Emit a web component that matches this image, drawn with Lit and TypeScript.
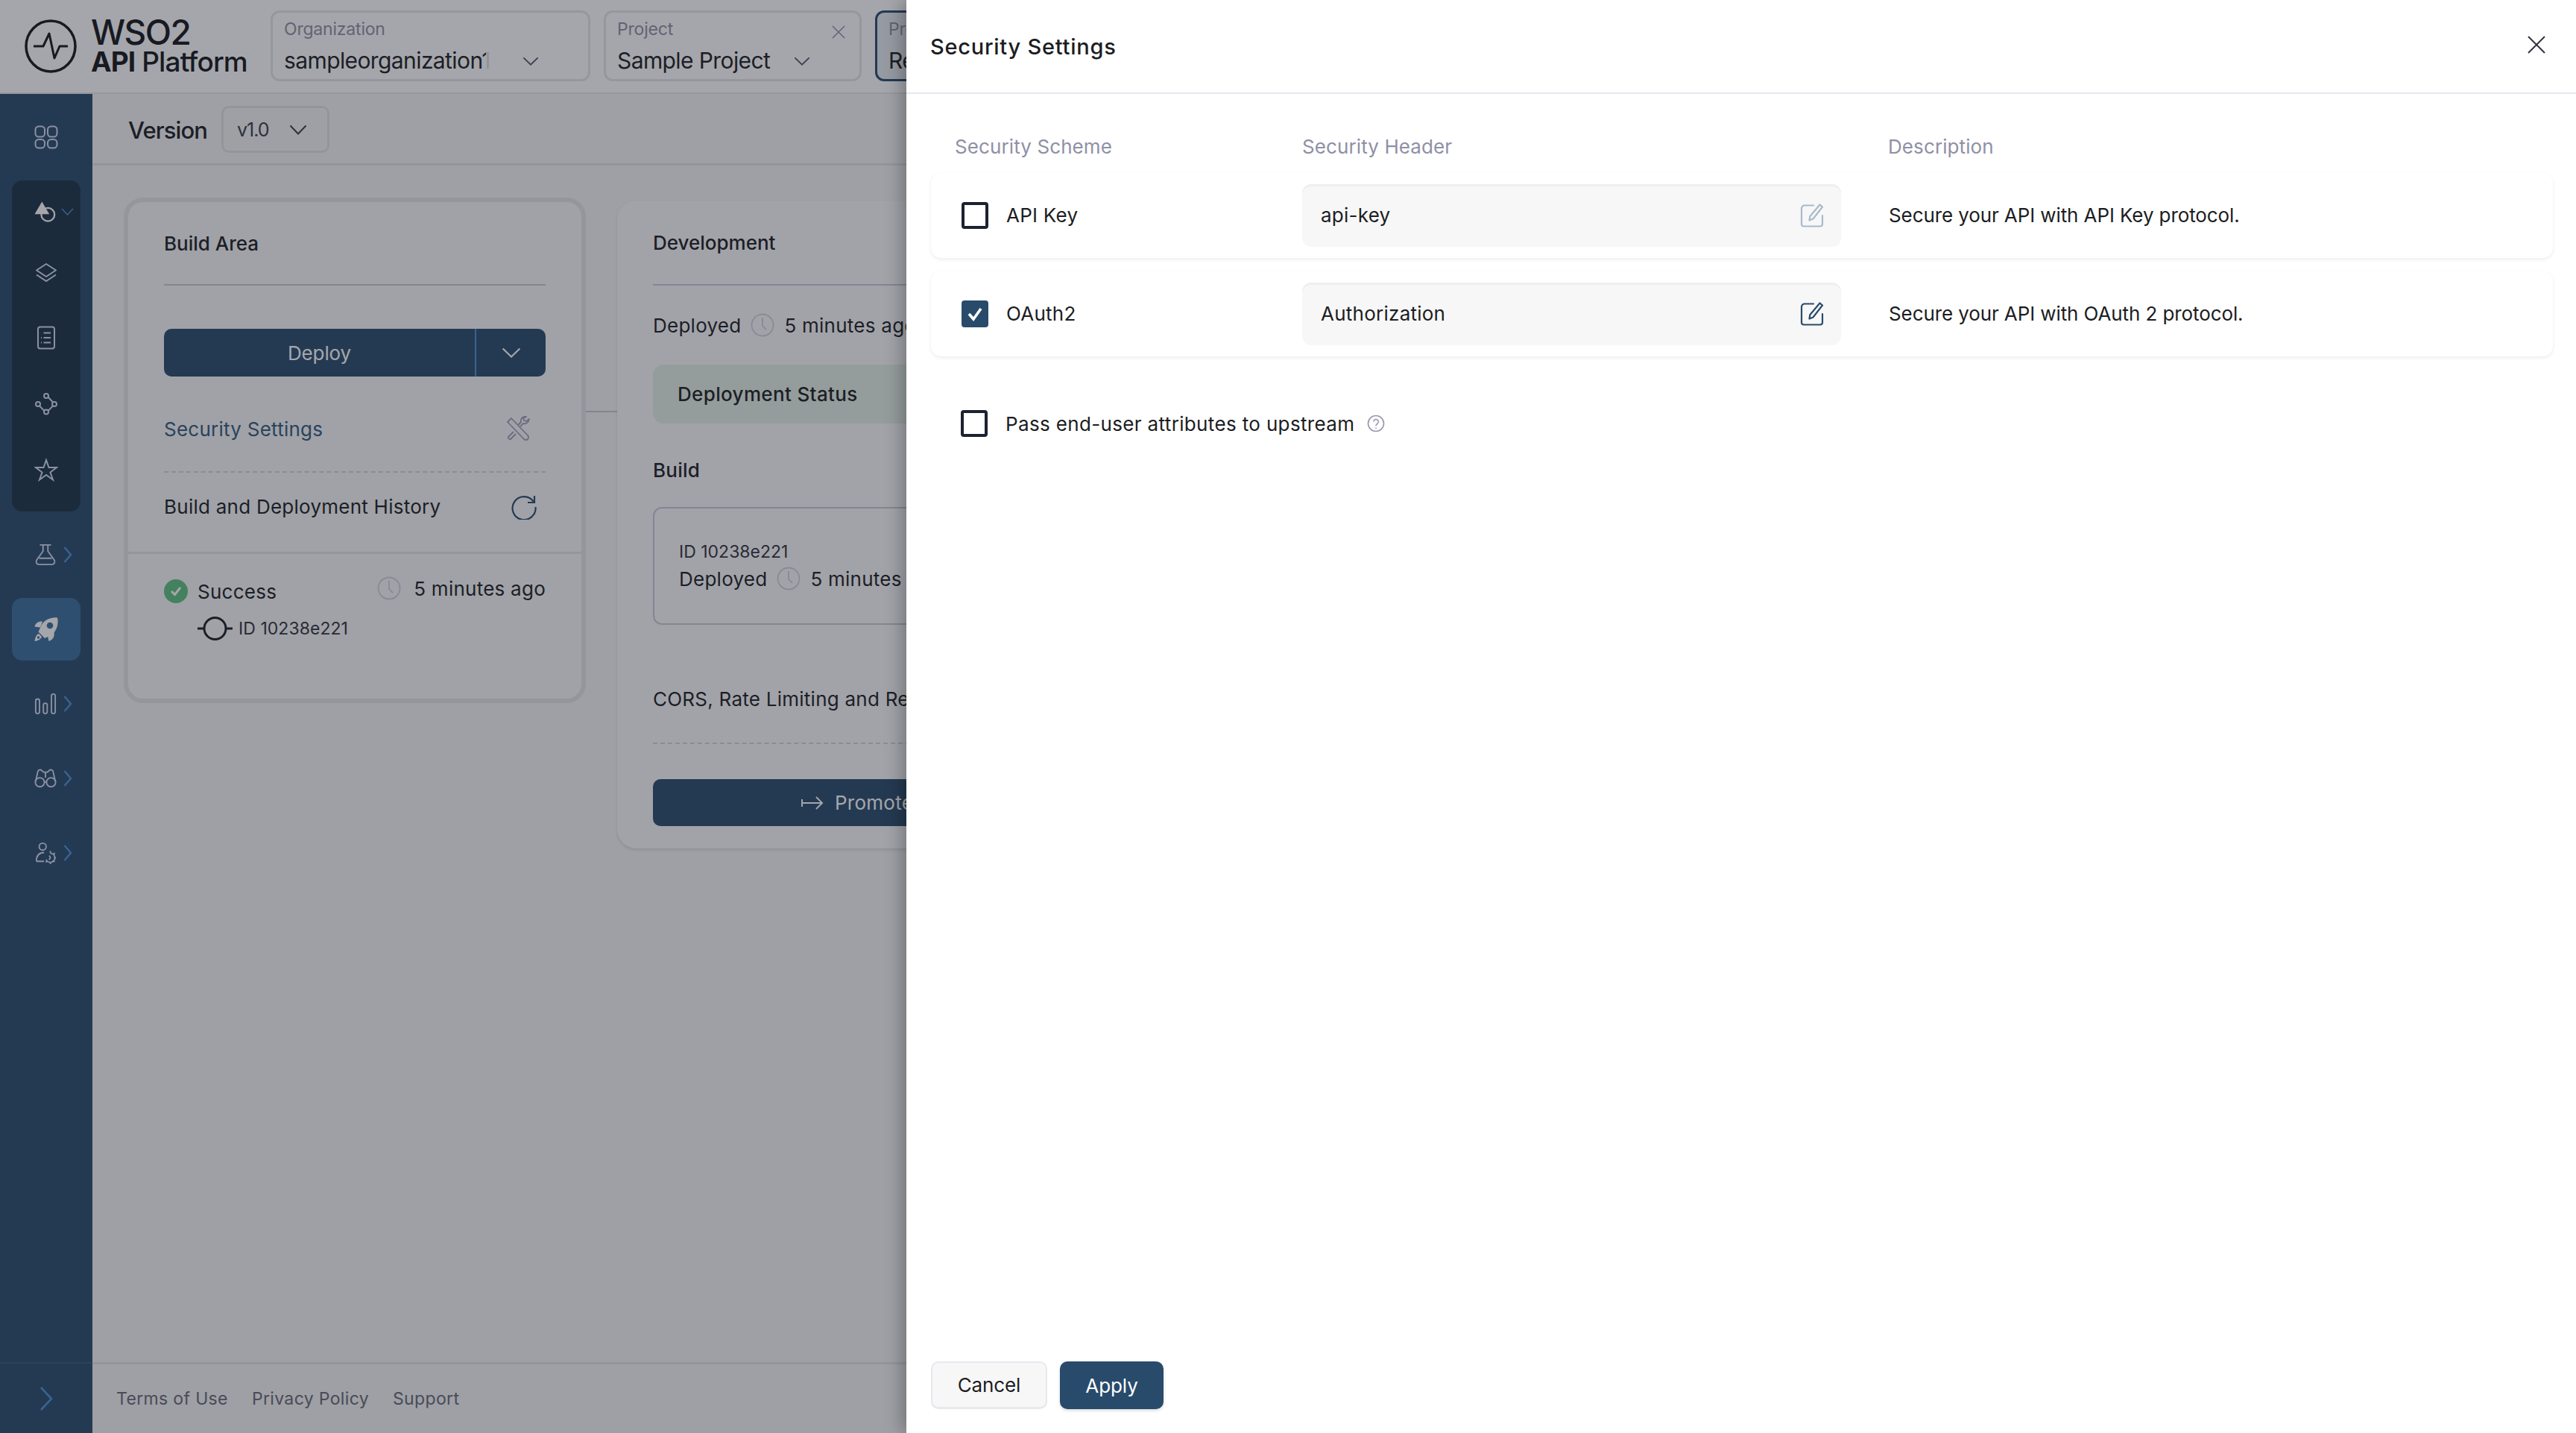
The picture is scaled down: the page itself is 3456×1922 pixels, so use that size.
import { LitElement, html, css, svg } from "lit";
import { customElement } from "lit/decorators.js";

const chevDown = (w = 24, h = 14) => html`<svg width=${w} height=${h} viewBox="0 0 24 14" preserveAspectRatio="none" fill="none" stroke="currentColor" stroke-width="2"><path d="M1.5 1.5 12 12.5 22.5 1.5"/></svg>`;
const chevRight = () => html`<svg class="navchev" width="12" height="24" viewBox="0 0 12 24" fill="none" stroke="currentColor" stroke-width="2.4"><path d="M1.5 2 10 12 1.5 22"/></svg>`;
const clock = (w = 32) => html`<svg class="clock" width=${w} height=${w} viewBox="0 0 32 32" fill="none" stroke="currentColor" stroke-width="1.8"><circle cx="16" cy="16" r="14.5"/><path d="M16 6v11l5 5"/></svg>`;
const edit = (cls: string) => html`<svg class=${cls} width="32" height="32" viewBox="0 0 32 32" fill="none" stroke="currentColor" stroke-width="2.2" stroke-linejoin="round" stroke-linecap="round"><path d="M18 2.500H6a4 4 0 0 0-4 4v21a3 3 0 0 0 3 3h22a3 3 0 0 0 3-3V16"/><path d="M26.500 1.500l3.500 3-12.500 16-5 2 .8-5.300z"/></svg>`;

const icons: Record<string, unknown> = {
  dash: svg`<rect x="1.500" y="1.500" width="12.500" height="14" rx="4.500"/><rect x="18" y="1.500" width="12.500" height="14" rx="4.500"/><rect x="1.500" y="19" width="12.500" height="11.500" rx="4.500"/><rect x="18" y="19" width="12.500" height="11.500" rx="4.500"/>`,
  shapes: svg`<path d="M11 1.500 21.500 19.500H.5z" fill="currentColor" stroke="none"/><circle cx="19.500" cy="20" r="9.500" stroke-width="2.400"/>`,
  layers: svg`<path d="M16 4 29 12.500 16 21 3 12.500z" stroke-linejoin="round"/><path d="M3 18.500 16 27 29 18.500"/>`,
  doc: svg`<rect x="5" y="1.500" width="22" height="29" rx="3"/><path d="M12.500 9.500h9.500M12.500 16h9.500M12.500 22.500h9.500M9 16h1M9 22.500h1"/>`,
  path: svg`<circle cx="16" cy="5" r="3"/><circle cx="5" cy="16" r="3"/><circle cx="27" cy="16" r="3"/><circle cx="16" cy="26.500" r="3"/><path d="M18.500 6.500 25 13.500M7 18.500 13.500 25M18.500 25 25 18.500"/>`,
  star: svg`<path d="M16 3 19.500 13H30L21.500 19.500 25 29.500 16 23 7 29.500 10.500 19.500 2 13H12.500z" stroke-linejoin="miter"/>`,
  flask: svg`<path d="M8 2H24M12.500 2V11L3.500 23.500C1.500 27 3.500 30 7 30H25C28.500 30 30.500 27 28.500 23.500L19.500 11V2M7 21H25"/>`,
  rocket: svg`<path fill="currentColor" stroke="none" d="M31 .5C23 -.5 14 3 9.500 10.500L5.500 19.500 14 28 22.500 24C30 19 33 9 31 .5Z"/><path fill="currentColor" stroke="none" d="M11 5.500C6 5 1.500 7.500 .5 12.500L8 13.500ZM26.500 20C27.500 25 25.500 30 19.500 32L18 25Z"/><path fill="currentColor" stroke="none" d="M6 22C3 23 1 27 .5 32 5 31.500 9 29 10 26Z"/><circle cx="21" cy="11" r="4.300" fill="#3a6f9d" stroke="none"/><circle cx="5.500" cy="27" r="1.700" fill="#3a6f9d" stroke="none"/>`,
  bars: svg`<rect x="2" y="9" width="5.500" height="21" rx="2.700"/><rect x="13" y="15" width="5.500" height="15" rx="2.700"/><rect x="24.500" y="2" width="5.500" height="28" rx="2.700"/>`,
  bino: svg`<circle cx="8" cy="21.500" r="6.500"/><circle cx="24" cy="21.500" r="6.500"/><path d="M2 20 5 6.500C5.500 3.500 9 3 11 5L13 7H19L21 5C23 3 26.500 3.500 27 6.500L30 20M14.500 21.500H17.500M16 7V15"/>`,
  user: svg`<circle cx="12" cy="7" r="5"/><path d="M3 28H14M3 28C3 20 7 15.500 14 15.500"/><path d="M23 16.500a6.500 6.500 0 1 1-6 9M21 20a3 3 0 0 1 0 5.500M23 13v3M29.500 16l-2.500 2.500M31 23h-3M29 29l-2.500-2.500M23 32v-3M16.500 29.500l2.500-2.500"/>`,
};
const navIcon = (n: string, w = 32, h = 32, cls = "navicon") => html`<svg class=${cls} width=${w} height=${h} viewBox="0 0 32 32" fill="none" stroke="currentColor" stroke-width="2">${icons[n]}</svg>`;

@customElement("app-root")
export class AppRoot extends LitElement {
  static styles = css`
    :host { display: block; position: relative; width: 3456px; height: 1922px; overflow: hidden; background: #f4f5f6; color: #1c1d22; font-family: Inter, "Noto Sans", "Liberation Sans", sans-serif; font-size: 26px; letter-spacing: .25px; }
    * { box-sizing: border-box; }
    .page { display: flex; flex-direction: column; height: 1922px; }
    .topbar { flex: none; height: 126px; background: #fff; border-bottom: 2px solid #e6e7ea; display: flex; align-items: flex-start; padding: 14px 0 0 33px; }
    .logo { margin: 12px 0 0 0; flex: none; }
    .brand { width: 260px; padding: 8px 0 0 19px; flex: none; display: flex; flex-direction: column; color: #15161b; }
    .brand b { font-size: 46px; line-height: 42px; font-weight: 500; letter-spacing: -1.5px; }
    .brand span { font-size: 37px; line-height: 38px; font-weight: 500; letter-spacing: -.9px; white-space: nowrap; }
    .brand span strong { font-weight: 700; }
    .sel { height: 95px; border: 3px solid #e6e7ea; border-radius: 12px; padding: 8px 0 0 15px; position: relative; margin-right: 18px; flex: none; }
    .sel.org { width: 429px; }
    .sel.prj { width: 346px; }
    .sel.act { width: 300px; border-color: #284b6c; background: #e6ebf0; margin-right: 0; }
    .sel .lbl { font-size: 23px; line-height: 28px; color: #8f90a6; letter-spacing: -.2px; display: block; }
    .sel .val { font-size: 30px; line-height: 40px; color: #1c1d22; margin-top: 8px; white-space: nowrap; letter-spacing: -.6px; display: block; overflow: hidden; }
    .sel.org .val { width: 293px; position: relative; }
    .sel.org .val::after { content: ""; position: absolute; right: 0; top: 4px; width: 22px; height: 34px; background: rgba(255,255,255,.85); }
    .sel .chev { position: absolute; right: 66px; top: 46px; color: #55566a; }
    .sel .x { position: absolute; right: 19px; top: 17px; color: #8f90a6; }
    .body { flex: 1; display: flex; min-height: 0; }
    .side { flex: none; width: 124px; background: #284b6c; display: flex; flex-direction: column; padding-top: 16px; color: #d3dcf1; }
    .nav { height: 84px; margin: 0 16px 16px; border-radius: 14px; display: flex; align-items: center; padding-left: 30px; gap: 9px; flex: none; }
    .nav.on { background: #3a6f9d; color: #fff; }
    .navchev { color: #4a90d8; flex: none; display: flex; }
    .white { color: #fff; flex: none; }
    .group { margin: 0 16px 16px; height: 444px; background: #1a3245; border-radius: 14px; display: grid; grid-template-rows: 84px 80px 94px 84px 92px; flex: none; }
    .gitem { display: flex; align-items: center; padding-left: 30px; gap: 6px; }
    .sidefoot { margin-top: auto; height: 95px; border-top: 2px solid #35597c; display: flex; align-items: center; padding: 0 0 0 52px; color: #4a90d8; }
    .main { flex: 1; min-width: 0; display: flex; flex-direction: column; }
    .verrow { flex: none; height: 96px; border-bottom: 3px solid #e2e3e7; display: flex; align-items: flex-start; padding: 16px 0 0 48px; }
    .verrow .t { font-size: 31px; line-height: 65px; font-weight: 500; letter-spacing: -.9px; width: 125px; }
    .versel { width: 145px; height: 63px; border: 3px solid #e2e3e7; border-radius: 10px; display: flex; align-items: center; padding-left: 18px; gap: 27px; color: #3a3b45; font-size: 25px; letter-spacing: -1px; }
    .content { flex: 1; display: flex; align-items: flex-start; padding: 43px 0 0 42px; }
    .card1 { flex: none; width: 620px; height: 678px; background: #f7f8f9; border: 6px solid #e4e5e8; border-radius: 26px; padding: 0 48px; }
    .ctitle { height: 112px; display: flex; align-items: center; border-bottom: 2px solid #c8c9d6; font-weight: 500; letter-spacing: 0; }
    .deploy { margin-top: 58px; height: 64px; background: #284b6c; border-radius: 10px; display: flex; color: #fff; letter-spacing: -.1px; }
    .deploy .a { width: 419px; display: flex; align-items: center; justify-content: center; border-right: 2px solid #4a90d8; }
    .deploy .b { flex: 1; display: flex; align-items: center; justify-content: center; }
    .lrow { display: flex; align-items: center; justify-content: space-between; }
    .lrow.sec { margin-top: 13px; height: 116px; color: #35597c; border-bottom: 2px dashed #d2d3dc; padding-right: 20px; }
    .lrow.his { height: 91px; padding-right: 12px; }
    .wrench { color: #9ca1b6; }
    .refresh { color: #284b6c; }
    .hr { height: 3px; background: #e4e5e8; margin: 15px -48px 0; }
    .stat { display: flex; justify-content: space-between; align-items: flex-start; margin-top: 34px; }
    .stat .l { display: flex; align-items: center; gap: 13px; }
    .tick { width: 32px; height: 32px; border-radius: 50%; background: #5ec27f; display: flex; align-items: center; justify-content: center; color: #fff; }
    .stat .r { display: flex; align-items: center; gap: 17px; margin-top: -4px; }
    .clock { color: #cfd1dd; flex: none; }
    .idrow { display: flex; align-items: center; gap: 8px; margin: 18px 0 0 45px; font-size: 23px; letter-spacing: .05px; color: #30313a; }
    .conn { flex: none; width: 42px; height: 2px; background: #c8c9d6; margin-top: 286px; }
    .card2 { flex: none; width: 700px; height: 869px; margin-top: 4px; background: #fbfbfc; border-radius: 26px; box-shadow: 0 2px 4px rgba(0,0,0,.12); padding: 0 48px; white-space: nowrap; overflow: hidden; }
    .card2 .ctitle { height: 114px; }
    .dep { display: flex; align-items: center; gap: 13px; }
    .card2 > .dep { margin-top: 38px; height: 30px; }
    .status { margin-top: 38px; height: 79px; border-radius: 14px; background: #e4f1e6; display: flex; align-items: center; padding-left: 33px; font-weight: 500; letter-spacing: .35px; }
    .buildt { margin-top: 48px; height: 30px; line-height: 30px; font-weight: 500; }
    .bbox { margin-top: 34px; height: 158px; border: 2px solid #c8c9d6; border-radius: 12px; padding: 40px 0 0 33px; }
    .bbox .idl { height: 36px; font-size: 23px; letter-spacing: 0; color: #30313a; line-height: 36px; }
    .bbox .dep { height: 36px; }
    .cors { margin-top: 82px; height: 36px; line-height: 36px; }
    .dash2 { margin-top: 40px; border-bottom: 2px dashed #d2d3dc; }
    .prom { margin-top: 47px; height: 63px; background: #284b6c; border-radius: 10px; color: #fff; display: flex; align-items: center; padding-left: 199px; gap: 15px; }
    .mfoot { margin-top: auto; height: 95px; border-top: 3px solid #e2e3e7; display: flex; align-items: center; gap: 32px; padding: 0 0 0 32px; color: #666875; font-size: 23px; letter-spacing: .35px; flex: none; }
    .scrim { position: absolute; inset: 0; background: rgba(31,33,44,.4); }
    .drawer { position: absolute; left: 1216px; top: 0; right: 0; bottom: 0; background: #fff; box-shadow: -6px 0 22px rgba(0,0,0,.28); display: flex; flex-direction: column; }
    .dhead { flex: none; height: 126px; border-bottom: 2px solid #e8e8ef; display: flex; align-items: center; justify-content: space-between; padding: 0 41px 0 32px; }
    .dhead h1 { margin: 0; font-size: 29px; font-weight: 500; letter-spacing: .75px; color: #1c1d22; }
    .closex { color: #33343f; margin-top: -4px; }
    .dbody { flex: 1; padding: 34px 31px 0 33px; }
    .thead { display: grid; grid-template-columns: 498px 786px 1fr; height: 72px; align-items: center; color: #8f90a6; letter-spacing: .1px; }
    .thead > :first-child { padding-left: 32px; }
    .row { display: grid; grid-template-columns: 498px 723px 1fr; align-items: center; height: 114px; border-radius: 14px; background: #fff; box-shadow: 0 2px 5px rgba(20,20,40,.08); margin-bottom: 18px; padding-bottom: 1px; }
    .cbcell { display: flex; align-items: center; padding-left: 41px; gap: 24px; }
    .cb { width: 36px; height: 36px; border: 4px solid #1d2130; border-radius: 4px; flex: none; display: flex; align-items: center; justify-content: center; }
    .cb.on { background: #284b6c; border-color: #284b6c; color: #fff; }
    .inp { height: 84px; background: #f7f7f7; border-radius: 12px; box-shadow: inset 0 3px 0 #efefef; display: flex; align-items: center; justify-content: space-between; padding: 0 23px 0 25px; }
    .ed-off { color: #a9bacb; }
    .ed-on { color: #284b6c; }
    .desc { padding-left: 64px; letter-spacing: -.1px; }
    .pass { display: flex; align-items: center; margin: 72px 0 0 40px; gap: 24px; letter-spacing: .35px; }
    .help { color: #9a9bb0; margin-left: -7px; }
    .dfoot { flex: none; display: flex; gap: 17px; padding: 0 0 32px 33px; }
    .btn { height: 64px; border-radius: 10px; display: flex; align-items: center; justify-content: center; letter-spacing: -.1px; }
    .btn.c { width: 156px; background: #f7f7f7; border: 2px solid #e8e8ef; border-bottom-width: 3px; color: #1c1d22; }
    .btn.a { width: 139px; background: #284b6c; color: #fff; box-shadow: 0 2px 4px rgba(0,0,0,.15); }
  `;

  private row(label: string, on: boolean, hdr: string, desc: string) {
    return html`<div class="row">
      <div class="cbcell">
        <span class=${on ? "cb on" : "cb"}>${on ? html`<svg width="26" height="26" viewBox="0 0 26 26" fill="none" stroke="currentColor" stroke-width="3.600"><path d="M5 13 11 20 21 6"/></svg>` : ""}</span>
        <span>${label}</span>
      </div>
      <div class="inp"><span>${hdr}</span>${edit(on ? "ed-on" : "ed-off")}</div>
      <div class="desc">${desc}</div>
    </div>`;
  }

  render() {
    return html`
      <div class="page">
        <header class="topbar">
          <svg class="logo" width="70" height="72" viewBox="0 0 70 72" fill="none" stroke="#15161b" stroke-width="3.500"><ellipse cx="35" cy="36" rx="33" ry="34"/><path d="M12 36H25L33 19 40 52 47 36H58" stroke-width="3" stroke-linejoin="round"/></svg>
          <div class="brand"><b>WSO2</b><span><strong>API</strong> Platform</span></div>
          <div class="sel org"><span class="lbl">Organization</span><span class="val">sampleorganization1</span><span class="chev">${chevDown(22, 12)}</span></div>
          <div class="sel prj"><span class="lbl">Project</span><span class="val">Sample Project</span><span class="chev">${chevDown(22, 12)}</span>
            <svg class="x" width="18" height="18" viewBox="0 0 18 18" fill="none" stroke="currentColor" stroke-width="1.500"><path d="M1 1 17 17M17 1 1 17"/></svg></div>
          <div class="sel act"><span class="lbl">Pro</span><span class="val">Re</span></div>
        </header>
        <div class="body">
          <aside class="side">
            <div class="nav">${navIcon("dash")}</div>
            <div class="group">
              <div class="gitem">${navIcon("shapes", 30, 30, "white")}<span class="navchev">${chevDown(17, 10)}</span></div>
              <div class="gitem">${navIcon("layers")}</div>
              <div class="gitem">${navIcon("doc")}</div>
              <div class="gitem">${navIcon("path")}</div>
              <div class="gitem">${navIcon("star")}</div>
            </div>
            <div class="nav">${navIcon("flask", 30, 30)}${chevRight()}</div>
            <div class="nav on">${navIcon("rocket")}</div>
            <div class="nav">${navIcon("bars", 30, 30)}${chevRight()}</div>
            <div class="nav">${navIcon("bino", 30, 30)}${chevRight()}</div>
            <div class="nav">${navIcon("user", 30, 30)}${chevRight()}</div>
            <div class="sidefoot"><svg width="20" height="32" viewBox="0 0 20 32" fill="none" stroke="currentColor" stroke-width="2.600"><path d="M3 1 17 16 3 31"/></svg></div>
          </aside>
          <main class="main">
            <div class="verrow"><span class="t">Version</span><div class="versel"><span>v1.0</span>${chevDown(24, 14)}</div></div>
            <div class="content">
              <section class="card1">
                <div class="ctitle">Build Area</div>
                <div class="deploy"><div class="a">Deploy</div><div class="b">${chevDown(26, 14)}</div></div>
                <div class="lrow sec"><span>Security Settings</span>
                  <svg class="wrench" width="34" height="34" viewBox="0 0 34 34" fill="none" stroke="currentColor" stroke-width="1.800" stroke-linejoin="round"><path d="M3 8 8 3 30 26a3.500 3.500 0 0 1-5 5z"/><path d="M11 21 4 28a2.500 2.500 0 0 0 3 3l7-7M20 14l4-4c3 1 7-1 8-6l-4 3-3-1-1-3 4-2c-5-1-8 3-7 7l-4 4"/></svg></div>
                <div class="lrow his"><span>Build and Deployment History</span>
                  <svg class="refresh" width="34" height="34" viewBox="0 0 34 34" fill="none" stroke="currentColor" stroke-width="2.200"><path d="M30 10A15.500 15.500 0 1 0 32.500 17"/><path d="M31 2v9h-9"/></svg></div>
                <div class="hr"></div>
                <div class="stat">
                  <div class="l"><span class="tick"><svg width="16" height="14" viewBox="0 0 16 14" fill="none" stroke="currentColor" stroke-width="3"><path d="M2 7 6.500 11.500 14 2"/></svg></span><span>Success</span></div>
                  <div class="r">${clock()}<span>5 minutes ago</span></div>
                </div>
                <div class="idrow"><svg width="47" height="32" viewBox="0 0 47 32" fill="none" stroke="#1c1d22" stroke-width="3"><circle cx="23.500" cy="16" r="14.500"/><path d="M0 16H9M38 16H47"/></svg><span>ID 10238e221</span></div>
              </section>
              <div class="conn"></div>
              <section class="card2">
                <div class="ctitle">Development</div>
                <div class="dep"><span>Deployed</span>${clock()}<span>5 minutes ago</span></div>
                <div class="status">Deployment Status</div>
                <div class="buildt">Build</div>
                <div class="bbox"><div class="idl">ID 10238e221</div><div class="dep"><span>Deployed</span>${clock()}<span>5 minutes ago</span></div></div>
                <div class="cors">CORS, Rate Limiting and Resources</div>
                <div class="dash2"></div>
                <div class="prom"><svg width="30" height="20" viewBox="0 0 30 20" fill="none" stroke="currentColor" stroke-width="2"><path d="M1 5v10M1 10H28M20 2l8 8-8 8"/></svg><span>Promote</span></div>
              </section>
            </div>
            <footer class="mfoot"><span>Terms of Use</span><span>Privacy Policy</span><span>Support</span></footer>
          </main>
        </div>
      </div>
      <div class="scrim"></div>
      <aside class="drawer">
        <div class="dhead"><h1>Security Settings</h1>
          <svg class="closex" width="24" height="24" viewBox="0 0 24 24" fill="none" stroke="currentColor" stroke-width="2"><path d="M1 1 23 23M23 1 1 23"/></svg></div>
        <div class="dbody">
          <div class="thead"><span>Security Scheme</span><span>Security Header</span><span>Description</span></div>
          ${this.row("API Key", false, "api-key", "Secure your API with API Key protocol.")}
          ${this.row("OAuth2", true, "Authorization", "Secure your API with OAuth 2 protocol.")}
          <div class="pass"><span class="cb"></span><span>Pass end-user attributes to upstream</span>
            <svg class="help" width="24" height="24" viewBox="0 0 24 24" fill="none" stroke="currentColor" stroke-width="1.700"><circle cx="12" cy="12" r="10.500"/><path d="M8.800 9.500a3.200 3.200 0 1 1 5 2.700c-1.300.9-1.800 1.500-1.800 3"/><path d="M12 17.500v1.500"/></svg></div>
        </div>
        <div class="dfoot"><div class="btn c">Cancel</div><div class="btn a">Apply</div></div>
      </aside>
    `;
  }
}
